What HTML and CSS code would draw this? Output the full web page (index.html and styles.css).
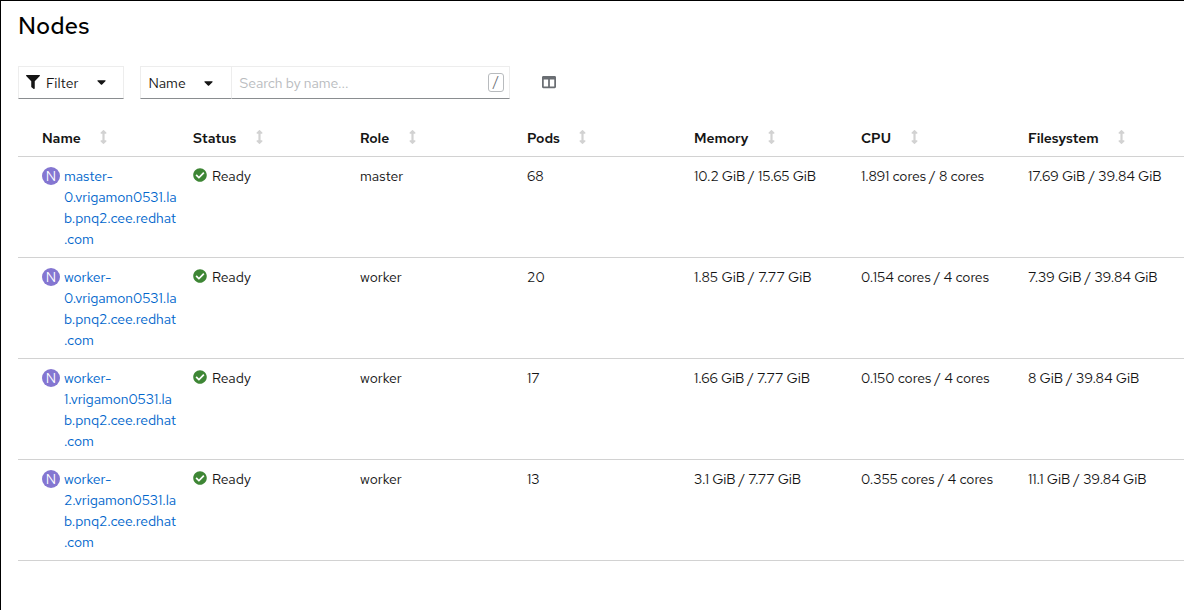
FILE: index.html
```
<!DOCTYPE html>
<html lang="en">
<head>
<meta charset="utf-8">
<title>Nodes</title>
<link rel="stylesheet" href="styles.css">
</head>
<body>
<svg class="defs" width="0" height="0" aria-hidden="true">
  <symbol id="sort" viewBox="0 0 256 512"><path d="M214.059 377.941H168V134.059h46.059c21.382 0 32.09-25.851 16.971-40.971L144.971 7.029c-9.373-9.373-24.568-9.373-33.941 0L24.971 93.088c-15.119 15.119-4.411 40.971 16.971 40.971H88v243.882H41.941c-21.382 0-32.09 25.851-16.971 40.971l86.059 86.059c9.373 9.373 24.568 9.373 33.941 0l86.059-86.059c15.12-15.119 4.412-40.971-16.97-40.971z"/></symbol>
  <symbol id="ok" viewBox="0 0 512 512"><path d="M504 256c0 136.967-111.033 248-248 248S8 392.967 8 256 119.033 8 256 8s248 111.033 248 248zM227.314 387.314l184-184c6.248-6.248 6.248-16.379 0-22.627l-22.627-22.627c-6.248-6.249-16.379-6.249-22.628 0L216 308.118l-70.059-70.059c-6.248-6.248-16.379-6.248-22.628 0l-22.627 22.627c-6.248 6.248-6.248 16.379 0 22.627l104 104c6.249 6.249 16.379 6.249 22.628.001z"/></symbol>
  <symbol id="caret" viewBox="0 0 320 512"><path d="M31.3 192h257.3c17.8 0 26.7 21.5 14.1 34.1L174.1 354.8c-7.8 7.8-20.5 7.8-28.3 0L17.2 226.1C4.6 213.5 13.5 192 31.3 192z"/></symbol>
  <symbol id="filter" viewBox="0 0 512 512"><path d="M487.976 0H24.028C2.71 0-8.047 25.866 7.058 40.971L192 225.941V432c0 7.831 3.821 15.17 10.237 19.662l80 55.98C298.02 518.69 320 507.493 320 487.98V225.941l184.947-184.97C520.021 25.896 509.338 0 487.976 0z"/></symbol>
  <symbol id="columns" viewBox="0 0 512 512"><path d="M464 32H48C21.49 32 0 53.49 0 80v352c0 26.51 21.49 48 48 48h416c26.51 0 48-21.49 48-48V80c0-26.51-21.49-48-48-48zM224 416H64V160h160v256zm224 0H288V160h160v256z"/></symbol>
</svg>
<main class="page">
  <h1 class="title">Nodes</h1>
  <div class="toolbar">
    <button class="select select-filter"><svg class="icon"><use href="#filter"/></svg><span class="filter-label">Filter</span><svg class="caret"><use href="#caret"/></svg></button>
    <div class="search-group">
      <button class="select select-name"><span class="name-label">Name</span><svg class="caret"><use href="#caret"/></svg></button>
      <div class="search"><span class="placeholder">Search by name...</span><kbd class="key">/</kbd></div>
    </div>
    <button class="manage" aria-label="Manage columns"><svg class="icon"><use href="#columns"/></svg></button>
  </div>
  <div class="table">
    <div class="row head">
      <div>Name<svg class="sort"><use href="#sort"/></svg></div>
      <div>Status<svg class="sort"><use href="#sort"/></svg></div>
      <div>Role<svg class="sort"><use href="#sort"/></svg></div>
      <div>Pods<svg class="sort"><use href="#sort"/></svg></div>
      <div class="tight">Memory<svg class="sort"><use href="#sort"/></svg></div>
      <div>CPU<svg class="sort"><use href="#sort"/></svg></div>
      <div class="tight">Filesystem<svg class="sort"><use href="#sort"/></svg></div>
    </div>
    <div class="row">
      <div class="node"><span class="badge">N</span><a class="link">master-<br>0.vrigamon0531.la<br>b.pnq2.cee.redhat<br>.com</a></div>
      <div class="status"><svg class="ok"><use href="#ok"/></svg>Ready</div>
      <div>master</div><div>68</div><div class="tight">10.2 GiB / 15.65 GiB</div><div class="cpu">1.891 cores / 8 cores</div><div class="cpu">17.69 GiB / 39.84 GiB</div>
    </div>
    <div class="row">
      <div class="node"><span class="badge">N</span><a class="link">worker-<br>0.vrigamon0531.la<br>b.pnq2.cee.redhat<br>.com</a></div>
      <div class="status"><svg class="ok"><use href="#ok"/></svg>Ready</div>
      <div>worker</div><div>20</div><div>1.85 GiB / 7.77 GiB</div><div class="cpu">0.154 cores / 4 cores</div><div class="cpu">7.39 GiB / 39.84 GiB</div>
    </div>
    <div class="row">
      <div class="node"><span class="badge">N</span><a class="link">worker-<br>1.vrigamon0531.la<br>b.pnq2.cee.redhat<br>.com</a></div>
      <div class="status"><svg class="ok"><use href="#ok"/></svg>Ready</div>
      <div>worker</div><div>17</div><div class="tight">1.66 GiB / 7.77 GiB</div><div class="cpu">0.150 cores / 4 cores</div><div class="cpu">8 GiB / 39.84 GiB</div>
    </div>
    <div class="row">
      <div class="node"><span class="badge">N</span><a class="link">worker-<br>2.vrigamon0531.la<br>b.pnq2.cee.redhat<br>.com</a></div>
      <div class="status"><svg class="ok"><use href="#ok"/></svg>Ready</div>
      <div>worker</div><div>13</div><div class="tight">3.1 GiB / 7.77 GiB</div><div class="cpu">0.355 cores / 4 cores</div><div class="cpu">11.1 GiB / 39.84 GiB</div>
    </div>
  </div>
</main>
</body>
</html>
```
FILE: styles.css
```
* { box-sizing: border-box; }
body {
  margin: 0;
  background: #fff;
  color: #151515;
  font: 400 14px/21px "Red Hat Text", Inter, sans-serif;
}
.defs { display: block; }
svg { fill: currentColor; flex: none; }
.page {
  height: 610px;
  overflow: hidden;
  padding: 9px 0 0 17px;
  border-top: 1px solid #000;
  border-left: 1px solid #000;
}
.title {
  margin: 0 0 25px;
  font-size: 24px;
  font-weight: 500;
  line-height: 31px;
  color: #000;
}
.toolbar { display: flex; align-items: stretch; height: 33px; }
button {
  appearance: none;
  background: #fff;
  border: 0;
  margin: 0;
  padding: 0;
  font: inherit;
  color: inherit;
}
.select {
  display: flex;
  align-items: center;
  border: 1px solid #ededed;
  border-bottom-color: #8a8d90;
}
.icon { width: 14px; height: 14px; }
.caret { width: 9px; height: 14px; }
.select-filter { width: 106px; margin-right: 16px; padding: 1px 0 0 7px; }
.select-filter .icon, .select-filter .caret { margin-bottom: 2px; }
.filter-label { width: 33px; margin: 0 17.5px 0 6px; text-align: left; }
.search-group { display: flex; width: 370px; }
.select-name { width: 91px; padding: 1px 0 0 7.5px; border-right: 0; }
.name-label { width: 38px; margin-right: 17.5px; text-align: left; }
.search {
  flex: 1;
  display: flex;
  align-items: center;
  justify-content: space-between;
  padding: 0 5px 0 7.5px;
  border: 1px solid #ededed;
  border-bottom-color: #8a8d90;
}
.placeholder { padding-top: 1px; color: #b8bbbe; letter-spacing: -0.04px; }
.key {
  width: 16px;
  height: 19px;
  border: 1px solid #b8bbbe;
  border-radius: 3px;
  font: inherit;
  font-size: 13px;
  line-height: 16px;
  text-align: center;
  color: #6a6e73;
}
.manage { display: flex; align-items: center; margin-left: 32px; padding-bottom: 2px; color: #6a6e73; }
.table { margin-top: 21px; }
.row {
  display: grid;
  grid-template-columns: 151px repeat(5, 167px) 1fr;
  height: 101px;
  padding: 9px 0 0 24px;
  border-bottom: 1px solid #d2d2d2;
  white-space: nowrap;
}
.tight { letter-spacing: -0.1px; }
.cpu { letter-spacing: -0.04px; }
.head { height: 37px; padding-top: 8px; font-weight: 600; }
.head > div { display: flex; align-items: flex-start; }
.sort { width: 7px; height: 14px; margin: 2px 0 0 19.5px; color: #d2d2d2; }
.node { display: flex; align-items: flex-start; }
.badge {
  width: 18px;
  height: 18px;
  margin: 1px 4px 0 0;
  border-radius: 50%;
  background: #8476d1;
  color: #fff;
  line-height: 18px;
  text-align: center;
}
.link { color: #06c; letter-spacing: -0.07px; }
.status { display: flex; align-items: flex-start; }
.ok { width: 14px; height: 14px; margin: 2px 5px 0 0; color: #3e8635; }
```
